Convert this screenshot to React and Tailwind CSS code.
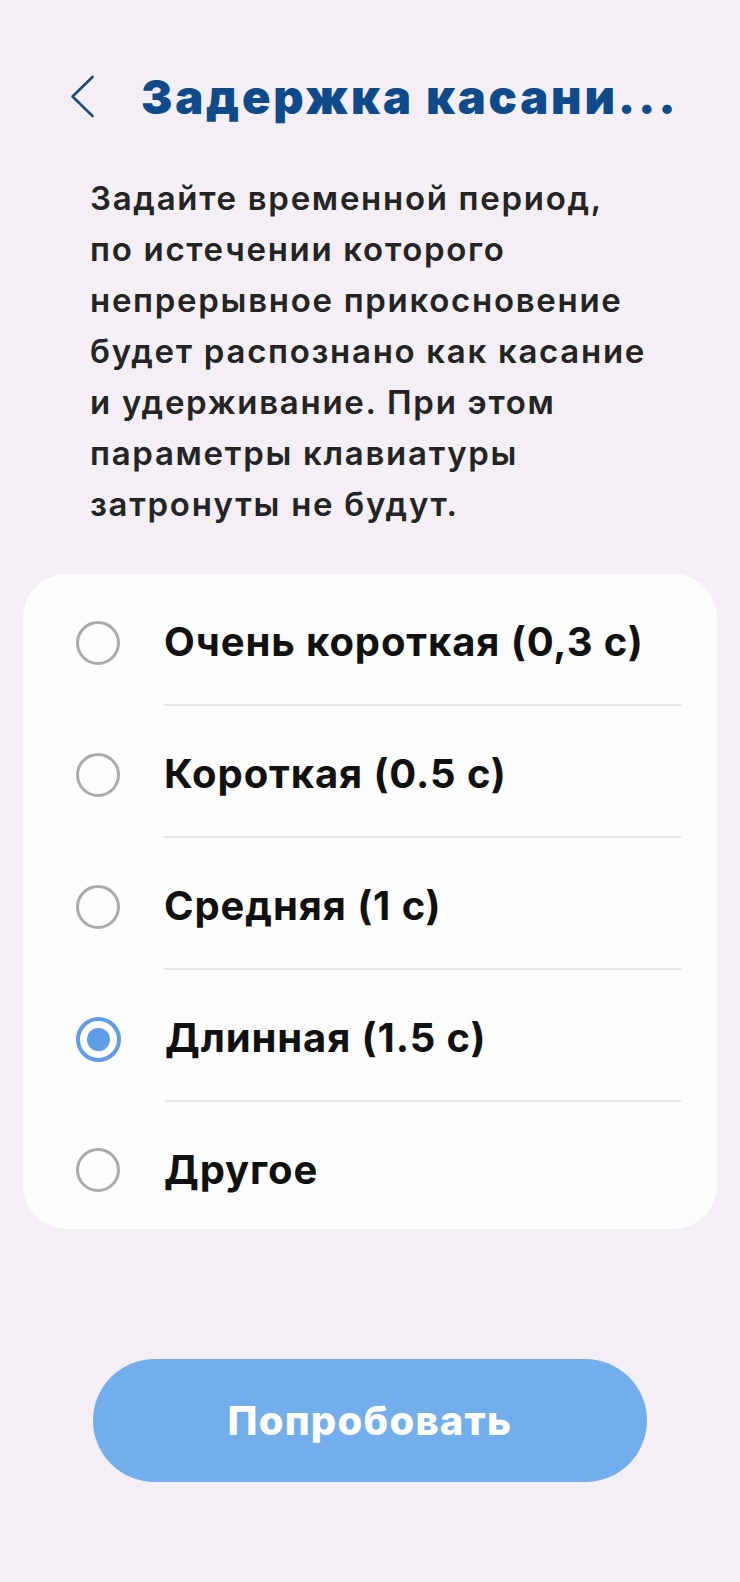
import React from "react";

const options = [
  { label: "Очень короткая (0,3 с)", selected: false },
  { label: "Короткая (0.5 с)", selected: false },
  { label: "Средняя (1 с)", selected: false },
  { label: "Длинная (1.5 с)", selected: true },
  { label: "Другое", selected: false },
];

const descLines = [
  "Задайте временной период,",
  "по истечении которого",
  "непрерывное прикосновение",
  "будет распознано как касание",
  "и удерживание. При этом",
  "параметры клавиатуры",
  "затронуты не будут.",
];

function Radio({ selected }) {
  if (selected) {
    return (
      <div className="w-[45px] h-[45px] rounded-full border-[4px] border-[#5f9de6] flex items-center justify-center shrink-0">
        <div className="w-[23px] h-[23px] rounded-full bg-[#5f9de6]" />
      </div>
    );
  }
  return (
    <div className="w-[44px] h-[44px] rounded-full border-[3px] border-[#ababab] shrink-0" />
  );
}

export default function App() {
  return (
    <div
      className="w-[740px] min-h-[1582px] bg-[#f3eff5] flex flex-col"
      style={{ fontFamily: "Inter, 'Noto Sans', sans-serif" }}
    >
      {/* Header */}
      <div className="flex items-center pt-[76px] pl-[70px] h-[118px]">
        <svg width="26" height="44" viewBox="0 0 26 44" fill="none" className="shrink-0">
          <path d="M22.5 2 L2.5 21.5 L22.5 41" stroke="#1d4a7e" strokeWidth="2.6" strokeLinecap="round" strokeLinejoin="round" />
        </svg>
        <h1 className="ml-[45px] text-[47px] leading-[44px] font-black text-[#0f4a8a] whitespace-nowrap tracking-[2.8px]">
          Задержка касани...
        </h1>
      </div>

      {/* Description */}
      <div className="mt-[55px] pl-[90px] text-[33px] leading-[51px] font-semibold text-[#242424] tracking-[1.7px]">
        {descLines.map((l, i) => (
          <div key={i} className="whitespace-nowrap">{l}</div>
        ))}
      </div>

      {/* Options card */}
      <div className="mt-[44px] mx-[23px] bg-[#fdfdfd] rounded-[44px] flex flex-col">
        {options.map((o, i) => {
          const last = i === options.length - 1;
          return (
            <div key={i} className="flex pl-[53px] pr-[36px]">
              <div className={`flex items-center ${last ? "h-[127px] pt-[9px]" : "h-[132px] pt-[6px]"}`}>
                <Radio selected={o.selected} />
              </div>
              <div
                className={`ml-[44px] flex-1 flex items-center ${
                  last ? "h-[127px] pt-[9px]" : "h-[132px] pt-[6px] border-b-2 border-[#e6e4e7]"
                }`}
              >
                <span className="text-[40px] font-bold text-[#111111] whitespace-nowrap tracking-[0.9px]">
                  {o.label}
                </span>
              </div>
            </div>
          );
        })}
      </div>

      {/* Button */}
      <div className="mt-[130px] flex justify-center">
        <button className="w-[554px] h-[123px] rounded-full bg-[#72aeec] text-white text-[40px] font-extrabold tracking-[1.2px]">
          Попробовать
        </button>
      </div>
    </div>
  );
}
